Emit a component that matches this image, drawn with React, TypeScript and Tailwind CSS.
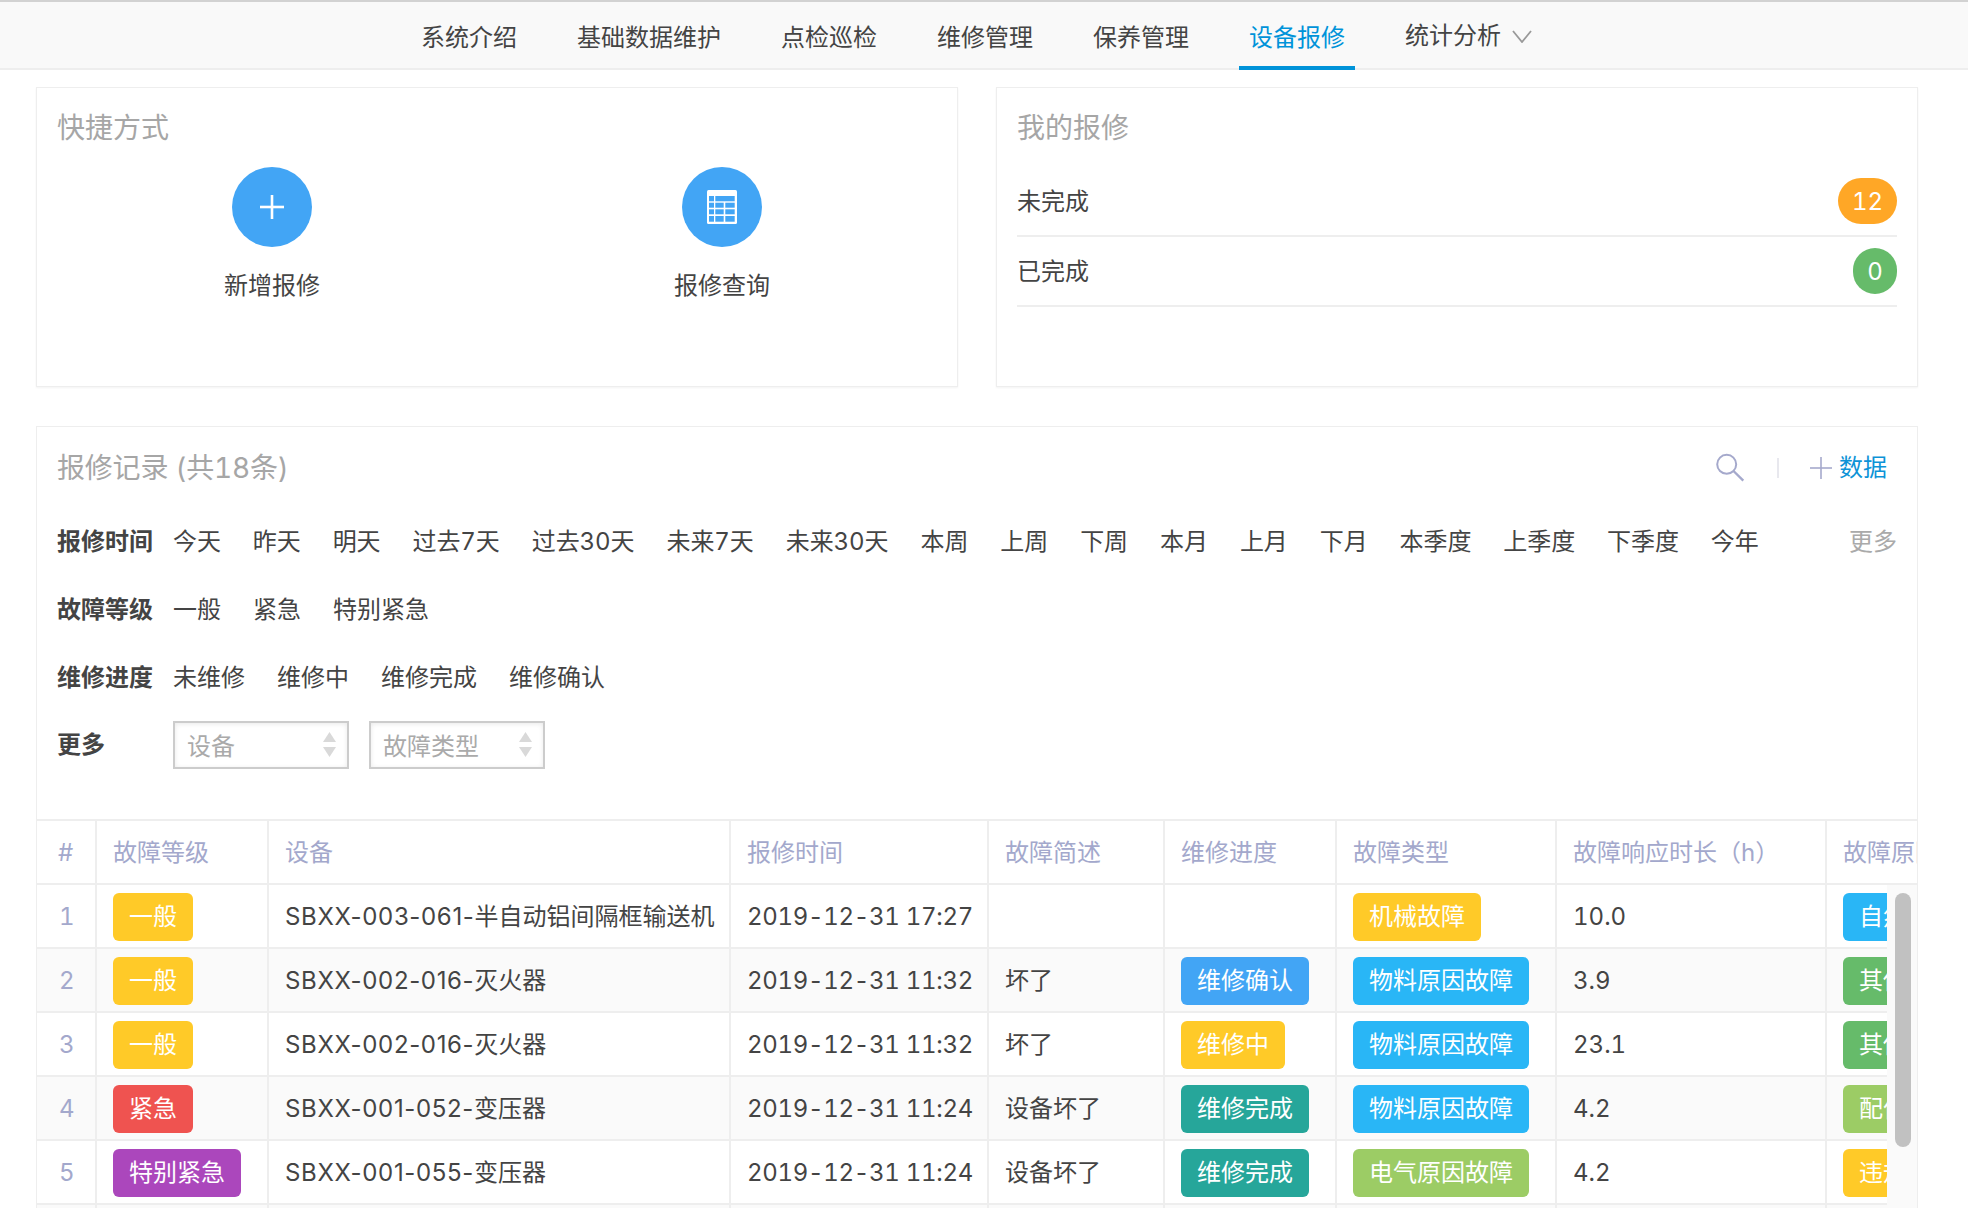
const navItems = ['系统介绍', '基础数据维护', '点检巡检', '维修管理', '保养管理'];
const timeFilters = ['今天', '昨天', '明天', '过去7天', '过去30天', '未来7天', '未来30天', '本周', '上周', '下周', '本月', '上月', '下月', '本季度', '上季度', '下季度', '今年'];
const headers = ['#', '故障等级', '设备', '报修时间', '故障简述', '维修进度', '故障类型', '故障响应时长（h）', '故障原因'];

const colWidths = ['w-[60px]', 'w-[172px]', 'w-[462px]', 'w-[258px]', 'w-[176px]', 'w-[172px]', 'w-[220px]', 'w-[270px]', 'w-[200px]'];

const YELLOW = 'bg-[#ffca28]';
const RED = 'bg-[#ef5350]';
const PURPLE = 'bg-[#ab47bc]';
const BLUE = 'bg-[#42a5f5]';
const SKY = 'bg-[#29b6f6]';
const TEAL = 'bg-[#26a69a]';
const GREEN = 'bg-[#66bb6a]';
const LIME = 'bg-[#9ccc65]';

type Tag = { text: string; color: string };

const rows: {
  level: Tag;
  code: string;
  device: string;
  time: string;
  desc: string;
  progress?: Tag;
  type: Tag;
  hours: string;
  reason: Tag;
}[] = [
  { level: { text: '一般', color: YELLOW }, code: 'SBXX-003-061-', device: '半自动铝间隔框输送机', time: '2019-12-31 17:27', desc: '', type: { text: '机械故障', color: YELLOW }, hours: '10.0', reason: { text: '自然损耗', color: SKY } },
  { level: { text: '一般', color: YELLOW }, code: 'SBXX-002-016-', device: '灭火器', time: '2019-12-31 11:32', desc: '坏了', progress: { text: '维修确认', color: BLUE }, type: { text: '物料原因故障', color: SKY }, hours: '3.9', reason: { text: '其他原因', color: GREEN } },
  { level: { text: '一般', color: YELLOW }, code: 'SBXX-002-016-', device: '灭火器', time: '2019-12-31 11:32', desc: '坏了', progress: { text: '维修中', color: YELLOW }, type: { text: '物料原因故障', color: SKY }, hours: '23.1', reason: { text: '其他原因', color: GREEN } },
  { level: { text: '紧急', color: RED }, code: 'SBXX-001-052-', device: '变压器', time: '2019-12-31 11:24', desc: '设备坏了', progress: { text: '维修完成', color: TEAL }, type: { text: '物料原因故障', color: SKY }, hours: '4.2', reason: { text: '配件问题', color: LIME } },
  { level: { text: '特别紧急', color: PURPLE }, code: 'SBXX-001-055-', device: '变压器', time: '2019-12-31 11:24', desc: '设备坏了', progress: { text: '维修完成', color: TEAL }, type: { text: '电气原因故障', color: LIME }, hours: '4.2', reason: { text: '违规操作', color: YELLOW } },
];

const Badge = ({ tag }: { tag: Tag }) => (
  <span className={`inline-flex h-12 items-center rounded-md px-4 text-white align-middle ${tag.color}`}>{tag.text}</span>
);

const Cell = ({ children, first }: { children?: React.ReactNode; first?: boolean }) => (
  <td className={`h-16 border-r-2 border-b-2 border-[#eee] pt-0.5 ${first ? 'pl-[22px] text-[#a3a8cc]' : 'px-4'}`}>{children}</td>
);

const TableIcon = () => {
  const cols = [[2, 5], [8.3, 8.4], [18.3, 9.4]];
  const ys = [[12.7, 5], [19.3, 5], [26, 5.7]];
  return (
    <svg width="30" height="34" viewBox="0 0 30 34">
      <rect width="30" height="34" rx="1.5" fill="#fff" />
      <rect x="2" y="6" width="5" height="5.3" fill="#42a5f5" />
      <rect x="8.3" y="6" width="19.4" height="5.3" fill="#42a5f5" />
      {ys.map(([y, h]) =>
        cols.map(([x, w]) => <rect key={`${x}-${y}`} x={x} y={y} width={w} height={h} fill="#42a5f5" />),
      )}
    </svg>
  );
};

const SelectBox = ({ label }: { label: string }) => (
  <div className="flex h-12 w-[176px] items-center justify-between border-2 border-[#ccc] pl-[12px] pr-[11px] text-[#aaa] shadow-[inset_0_1px_5px_rgba(0,0,0,0.09)]">
    <span className="pt-1">{label}</span>
    <svg width="13" height="26" viewBox="0 0 13 26" fill="#d9d9d9">
      <polygon points="6.5,0 13,10 0,10" />
      <polygon points="0,15 13,15 6.5,25" />
    </svg>
  </div>
);

const FilterRow = ({ label, items }: { label: string; items: string[] }) => (
  <div className="flex h-[68px] items-center pt-0.5">
    <div className="w-[116px] font-bold">{label}</div>
    <div className="flex gap-8">
      {items.map((item) => (
        <span key={item}>{item}</span>
      ))}
    </div>
  </div>
);

export default function App() {
  return (
    <div className="h-screen overflow-hidden bg-white font-['Inter','Noto_Sans_CJK_SC',sans-serif] text-[24px] leading-9 text-[#444] tabular-nums">
      <nav className="flex h-[70px] gap-10 border-t-2 border-b-2 border-t-[#d2d2d2] border-b-[#eee] bg-[#f9f9f9] pl-[411px]">
        {navItems.map((item) => (
          <div key={item} className="flex items-center px-2.5 pt-[6px]">
            {item}
          </div>
        ))}
        <div className="-mb-0.5 flex items-center border-b-4 border-[#0093d9] px-2.5 pt-[8px] text-[#0093d9]">设备报修</div>
        <div className="flex items-center gap-[11px] px-2.5 pt-[2px]">
          统计分析
          <svg width="20" height="13" viewBox="0 0 20 13" fill="none" stroke="#999" strokeWidth="1.8">
            <polyline points="1,1 10,12 19,1" />
          </svg>
        </div>
      </nav>

      <main className="pt-[17px] pl-9 pr-[50px]">
        <div className="grid h-[300px] grid-cols-[922px_1fr] gap-[38px]">
          <section className="border border-[#eee] shadow-[0_1px_2px_rgba(0,0,0,0.05)]">
            <h2 className="pl-5 pt-5 text-[28px] leading-10 text-[#a6a6a6]">快捷方式</h2>
            <div className="mt-[19px] grid grid-cols-2 px-2.5">
              <div className="flex flex-col items-center">
                <div className="flex h-20 w-20 items-center justify-center rounded-full bg-[#42a5f5]">
                  <svg width="24" height="24" viewBox="0 0 24 24" stroke="#fff" strokeWidth="2.6">
                    <line x1="12" y1="0" x2="12" y2="24" />
                    <line x1="0" y1="12" x2="24" y2="12" />
                  </svg>
                </div>
                <div className="mt-[21px]">新增报修</div>
              </div>
              <div className="flex flex-col items-center">
                <div className="flex h-20 w-20 items-center justify-center rounded-full bg-[#42a5f5]">
                  <TableIcon />
                </div>
                <div className="mt-[21px]">报修查询</div>
              </div>
            </div>
          </section>

          <section className="border border-[#eee] px-5 shadow-[0_1px_2px_rgba(0,0,0,0.05)]">
            <h2 className="pt-5 text-[28px] leading-10 text-[#a6a6a6]">我的报修</h2>
            <div className="mt-[19px]">
              <div className="flex h-[70px] items-center justify-between border-b-2 border-[#eee]">
                <span className="pt-0.5">未完成</span>
                <span className="flex h-[46px] w-[59px] items-center justify-center rounded-full bg-[#ffa726] pt-0.5 text-white">12</span>
              </div>
              <div className="flex h-[70px] items-center justify-between border-b-2 border-[#eee]">
                <span className="pt-0.5">已完成</span>
                <span className="flex h-[46px] w-11 items-center justify-center rounded-full bg-[#66bb6a] pt-0.5 text-white">0</span>
              </div>
            </div>
          </section>
        </div>

        <section className="mt-[39px] border border-[#eee]">
          <div className="flex items-center justify-between pl-5 pr-[30px] pt-[21px]">
            <h2 className="text-[28px] leading-10 tracking-[-0.2px] text-[#a6a6a6]">报修记录 (共18条)</h2>
            <div className="flex items-center">
              <svg width="30" height="30" viewBox="0 0 30 30" fill="none" stroke="#a5a9cc" strokeWidth="2">
                <circle cx="11.7" cy="11.3" r="9.5" />
                <line x1="18.5" y1="18" x2="28.3" y2="27.7" strokeWidth="2.4" />
              </svg>
              <div className="ml-8 h-5 w-0.5 bg-[#e8e8ee]" />
              <svg className="ml-[31px]" width="22" height="22" viewBox="0 0 22 22" stroke="#a5a9cc" strokeWidth="1.6">
                <line x1="11" y1="0" x2="11" y2="22" />
                <line x1="0" y1="11" x2="22" y2="11" />
              </svg>
              <span className="ml-[7px] text-[#0d93d7]">数据</span>
            </div>
          </div>

          <div className="mt-[19px] px-5">
            <div className="flex h-[68px] items-center pt-0.5">
              <div className="w-[116px] font-bold">报修时间</div>
              <div className="flex gap-8 tracking-[-0.08px]">
                {timeFilters.map((item) => (
                  <span key={item}>{item}</span>
                ))}
              </div>
              <span className="ml-auto text-[#aaa]">更多</span>
            </div>
            <FilterRow label="故障等级" items={['一般', '紧急', '特别紧急']} />
            <FilterRow label="维修进度" items={['未维修', '维修中', '维修完成', '维修确认']} />
            <div className="flex h-[68px] items-center">
              <div className="w-[116px] font-bold">更多</div>
              <div className="flex gap-5">
                <SelectBox label="设备" />
                <SelectBox label="故障类型" />
              </div>
            </div>
          </div>

          <div className="relative mt-10 overflow-hidden border-t-2 border-[#eee]">
            <table className="w-[1990px] table-fixed border-separate border-spacing-0 whitespace-nowrap">
              <colgroup>
                {colWidths.map((w, i) => (
                  <col key={i} className={w} />
                ))}
              </colgroup>
              <thead>
                <tr className="text-left text-[#a3a8cc]">
                  {headers.map((h, i) => (
                    <th key={h} className={`h-16 border-r-2 border-b-2 border-[#eee] pt-0.5 font-normal ${i === 0 ? 'pl-[21px]' : 'px-4'}`}>
                      {h}
                    </th>
                  ))}
                </tr>
              </thead>
              <tbody>
                {rows.map((row, i) => (
                  <tr key={i} className={i % 2 === 1 ? 'bg-[#fafafa]' : ''}>
                    <Cell first>{i + 1}</Cell>
                    <Cell><Badge tag={row.level} /></Cell>
                    <Cell>
                      <span className="normal-nums tracking-[0.65px]">{row.code}</span>
                      {row.device}
                    </Cell>
                    <Cell><span className="tracking-[-0.3px]">{row.time}</span></Cell>
                    <Cell>{row.desc}</Cell>
                    <Cell>{row.progress && <Badge tag={row.progress} />}</Cell>
                    <Cell><Badge tag={row.type} /></Cell>
                    <Cell>{row.hours}</Cell>
                    <Cell><Badge tag={row.reason} /></Cell>
                  </tr>
                ))}
                <tr className="bg-[#fafafa]">
                  {headers.map((h) => (
                    <Cell key={h} />
                  ))}
                </tr>
              </tbody>
            </table>
            {/* table's own scrollbar */}
            <div className="absolute top-16 right-0 bottom-0 w-[30px] bg-[#fafafa]">
              <div className="ml-2 mt-2 h-[254px] w-4 rounded-lg bg-[#c1c1c1]" />
            </div>
          </div>
        </section>
      </main>
    </div>
  );
}
